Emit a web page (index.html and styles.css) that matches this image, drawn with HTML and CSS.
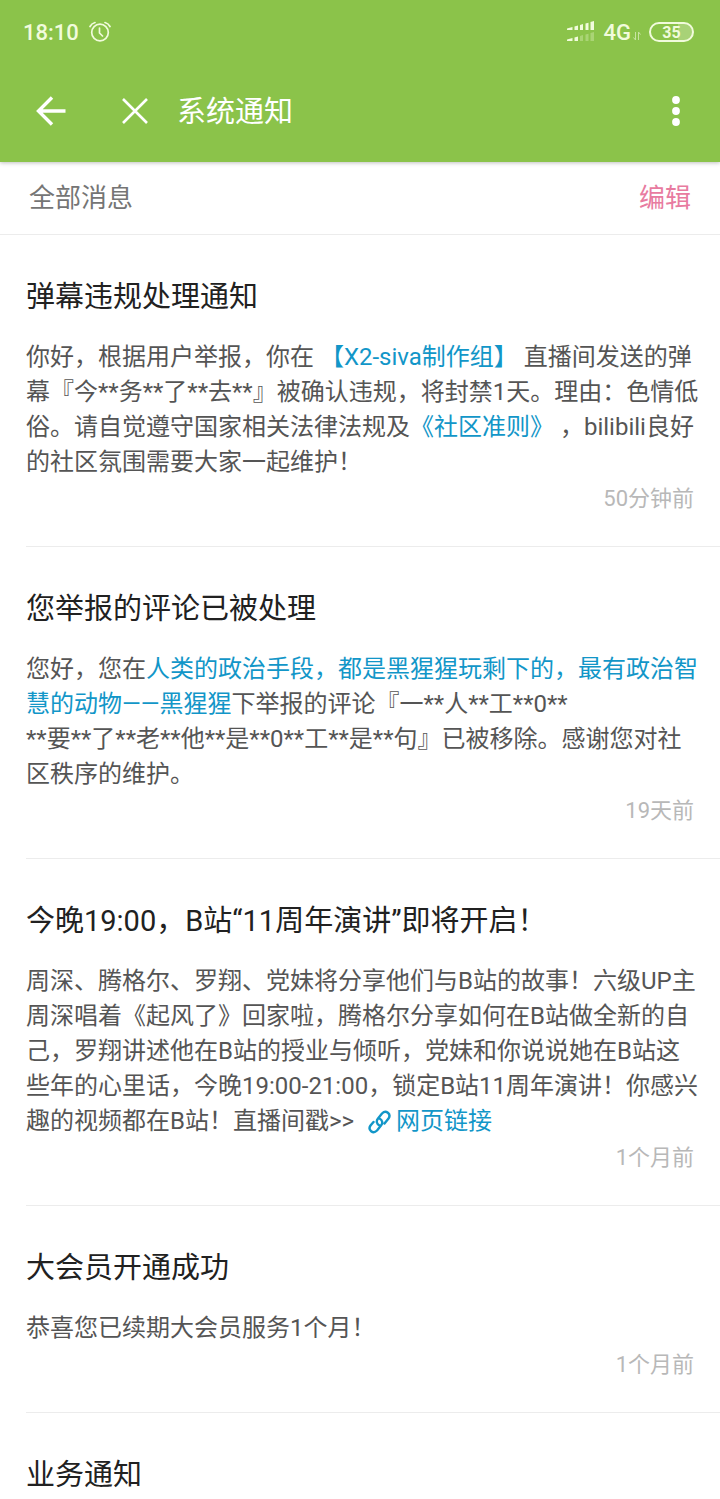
FILE: index.html
```
<!doctype html>
<html lang="zh-CN">
    <head>
        <meta charset="utf-8">
        <meta name="viewport" content="width=device-width, initial-scale=1">
        <title>系统通知</title>
        <link rel="stylesheet" href="styles.css">
    </head>
    <body>
        <header class="header">
            <div class="status">
                <span class="time">18:10</span>
                <svg class="alarm" width="22" height="22" viewBox="0 0 22 22" fill="none" stroke="currentColor" stroke-width="1.7" stroke-linecap="round">
                    <circle cx="11" cy="11.5" r="8.3"/>
                    <path d="M10.500 7v5l3 3M1 5.500Q2.500 2.500 6 1.500M21 5.500Q19.500 2.500 16 1.500"/>
                </svg>
                <svg class="signal" width="28" height="22" viewBox="0 0 28 22" fill="currentColor">
                    <path d="M0 7.500L5.500 6V9H0zM7.500 5.500L11 4.500V9H7.500zM13 4L16 3V9H13zM18.500 2.500L21.500 1.700V9H18.500zM23.500 1L27 0V9H23.500z"/>
                    <path d="M0 18.500L5.500 17V20H0zM7.500 16.500L11 15.500V20H7.500z"/>
                    <path opacity=".3" d="M13 15L16 14V20H13zM18.500 13.500L21.500 12.700V20H18.500zM23.500 12L27 11V20H23.500z"/>
                </svg>
                <span class="network">4G</span>
                <svg class="data" width="8" height="10" viewBox="0 0 8 10" fill="none" stroke="currentColor" opacity=".6">
                    <path d="M2.500 1v8L.5 6.500M5.500 9V1l2 2.500"/>
                </svg>
                <span class="battery">35</span>
            </div>
            <div class="toolbar">
                <button class="icon-btn back" aria-label="返回">
                    <svg width="30" height="30" viewBox="0 0 30 30" fill="none" stroke="currentColor" stroke-width="3.4">
                        <path d="M16 1.500L2.500 15L16 28.500M2.500 15H29.500"/>
                    </svg>
                </button>
                <button class="icon-btn close" aria-label="关闭">
                    <svg width="26" height="26" viewBox="0 0 26 26" fill="none" stroke="currentColor" stroke-width="2.6">
                        <path d="M1 1L25 25M25 1L1 25"/>
                    </svg>
                </button>
                <h1>系统通知</h1>
                <button class="icon-btn more" aria-label="更多">
                    <svg width="8" height="30" viewBox="0 0 8 30" fill="currentColor">
                        <circle cx="4" cy="4" r="3.9"/>
                        <circle cx="4" cy="15" r="3.9"/>
                        <circle cx="4" cy="26" r="3.9"/>
                    </svg>
                </button>
            </div>
        </header>

        <div class="filter">
            <span>全部消息</span>
            <button class="edit">编辑</button>
        </div>

        <main>
            <article class="notice">
                <h2>弹幕违规处理通知</h2>
                <p>你好，根据用户举报，你在 <a href="#">【X2-siva制作组】</a> 直播间发送的弹<br>幕『今**务**了**去**』被确认违规，将封禁1天。理由：色情低<br>俗。请自觉遵守国家相关法律法规及<a href="#">《社区准则》</a> ，bilibili良好<br>的社区氛围需要大家一起维护！</p>
                <time>50分钟前</time>
            </article>
            <article class="notice">
                <h2>您举报的评论已被处理</h2>
                <p>您好，您在<a href="#">人类的政治手段，都是黑猩猩玩剩下的，最有政治智<br>慧的动物——黑猩猩</a>下举报的评论『一**人**工**0**<br>**要**了**老**他**是**0**工**是**句』已被移除。感谢您对社<br>区秩序的维护。</p>
                <time>19天前</time>
            </article>
            <article class="notice">
                <h2>今晚19:00，B站“11周年演讲”即将开启！</h2>
                <p>周深、腾格尔、罗翔、党妹将分享他们与B站的故事！六级UP主<br>周深唱着《起风了》回家啦，腾格尔分享如何在B站做全新的自<br>己，罗翔讲述他在B站的授业与倾听，党妹和你说说她在B站这<br>些年的心里话，今晚19:00-21:00，锁定B站11周年演讲！你感兴<br>趣的视频都在B站！直播间戳&gt;&gt; <a href="#" class="web-link"><svg width="23" height="24" viewBox="0 0 23 24" fill="none" stroke="currentColor" stroke-width="2.4" stroke-linecap="round" stroke-linejoin="round"><path d="M11.500 15.500C8.500 14 8 11 10 8.500L14 3.500C18 -.5 23.500 4 20.500 8.500L16.500 13.500M11.500 8.500C14.500 10 15 13 13 15.500L9 20.500C5 24.500 -.5 20 2.500 15.500L5.500 12"/></svg>网页链接</a></p>
                <time>1个月前</time>
            </article>
            <article class="notice">
                <h2>大会员开通成功</h2>
                <p>恭喜您已续期大会员服务1个月！</p>
                <time>1个月前</time>
            </article>
            <article class="notice">
                <h2>业务通知</h2>
            </article>
        </main>
    </body>
</html>
```

FILE: styles.css
```
* {
    box-sizing: border-box;
}
body {
    margin: 0;
    background: #fff;
    color: #555;
    font-family: Roboto, "Noto Sans CJK SC", sans-serif;
    text-spacing-trim: space-all;
}
button {
    padding: 0;
    border: none;
    background: none;
    font-family: inherit;
    cursor: pointer;
}
a {
    color: #1296c8;
    text-decoration: none;
}
svg {
    display: block;
    flex: none;
}
h1, h2, p {
    margin: 0;
    font-weight: normal;
}

/* green top */
.header {
    position: relative;
    background: #8bc34a;
    color: #fff;
    box-shadow: 0 1px 4px rgba(0, 0, 0, .25);
}
.status {
    display: flex;
    align-items: center;
    height: 62px;
    padding: 2px 26px 0 23px;
    color: #f1fbdc;
    font-size: 22px;
    font-weight: 500;
}
.alarm {
    margin-left: 10px;
}
.signal {
    margin-left: auto;
}
.network {
    margin-left: 9px;
}
.data {
    margin: 8px 8px 0 2px;
}
.battery {
    width: 45px;
    height: 20px;
    border: 2px solid;
    border-radius: 10px;
    background: linear-gradient(90deg, transparent 65%, rgba(255, 255, 255, .25) 65%);
    font-size: 16px;
    font-weight: bold;
    line-height: 17px;
    text-align: center;
}
.toolbar {
    display: flex;
    align-items: center;
    height: 100px;
    padding: 0 40px 2px 36px;
}
.icon-btn {
    color: #fff;
}
.close {
    margin: 0 29px 0 56px;
}
h1 {
    flex: 1;
    padding-bottom: 4px;
    font-size: 29px;
}

.filter {
    display: flex;
    align-items: center;
    justify-content: space-between;
    height: 73px;
    padding: 0 29px 6px;
    border-bottom: 1px solid #ececec;
    color: #757575;
    font-size: 26px;
}
.edit {
    color: #e87ba0;
    font-size: 26px;
}

/* message list */
.notice {
    margin-left: 26px;
    padding: 41px 0 28px;
    border-bottom: 1px solid #ececec;
}
.notice:last-child {
    padding-bottom: 4px;
    border: none;
}
h2 {
    color: #212121;
    font-size: 29px;
    line-height: 42px;
}
.notice p {
    margin-top: 22px;
    font-size: 24px;
    line-height: 35px;
}
.notice time {
    display: block;
    padding-right: 26px;
    color: #b8b8b8;
    font-size: 22px;
    line-height: 38px;
    text-align: right;
}
.web-link svg {
    display: inline-block;
    margin: 0 5px 0 8px;
    vertical-align: -5px;
}
```
